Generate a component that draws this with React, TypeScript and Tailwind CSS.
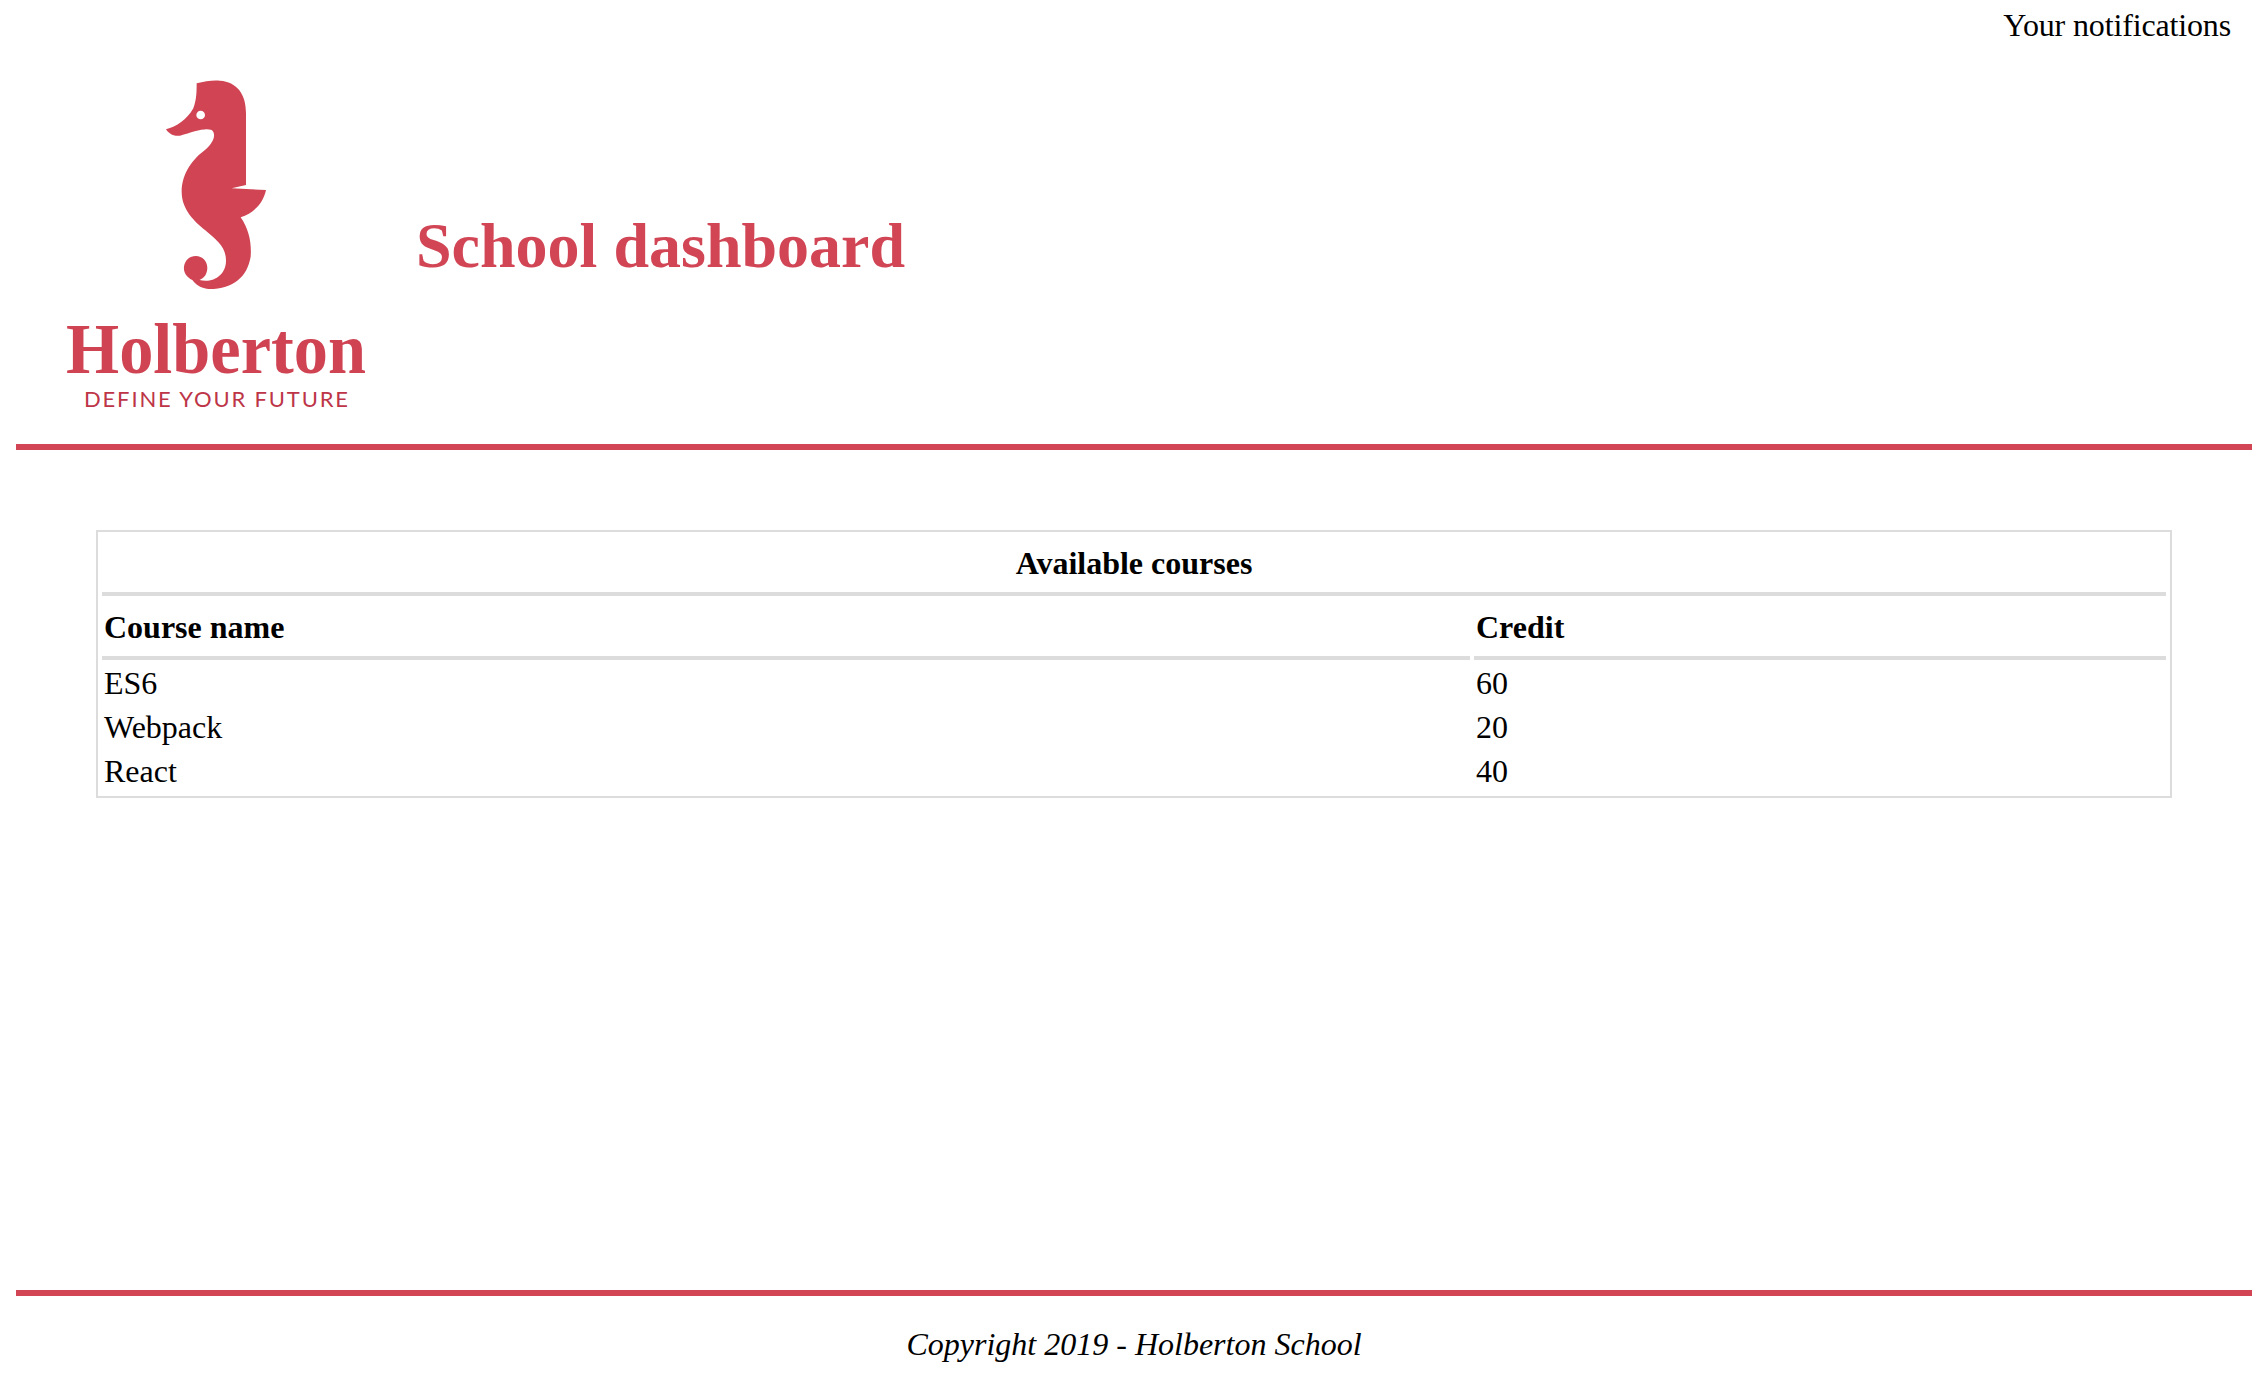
const courses = [
  { name: "ES6", credit: 60 },
  { name: "Webpack", credit: 20 },
  { name: "React", credit: 40 },
];

function Logo() {
  return (
    <svg width="384" height="400" viewBox="0 0 384 400" className="shrink-0">
      <g transform="translate(114 26) scale(0.3333)">
        <path
          fill="#d04454"
          d="M200 40 C225 33 250 30 270 32 C320 36 348 70 348 130 L348 345 L305 355 L408 360 C400 400 370 430 332 442 C358 480 365 520 362 560 C352 620 310 658 235 657 C212 655 196 642 187 630 C168 620 160 605 162 590 C165 570 180 558 197 558 C218 558 232 575 232 593 C232 612 222 625 208 630 C250 640 288 615 288 572 C288 530 260 510 225 480 C195 455 155 420 155 365 C155 310 190 265 225 240 C255 215 258 190 245 180 C225 172 190 185 150 197 C130 200 115 190 108 178 C140 170 170 150 190 115 C200 90 200 60 200 40 Z"
        />
        <circle cx="212" cy="135" r="13" fill="#fff" />
      </g>
      <text
        x="50"
        y="329"
        fill="#cf4353"
        fontFamily="'Liberation Serif', serif"
        fontWeight="700"
        fontSize="72"
        textLength="300"
        lengthAdjust="spacingAndGlyphs"
      >
        Holberton
      </text>
      <text
        x="68"
        y="363"
        fill="#bd3547"
        fontFamily="Lato, sans-serif"
        fontSize="22"
        textLength="264"
        lengthAdjust="spacing"
      >
        DEFINE YOUR FUTURE
      </text>
    </svg>
  );
}

export default function App() {
  return (
    <div className="flex h-[1376px] flex-col bg-white pr-3 pl-4 font-['Liberation_Serif',serif] text-[32px] leading-[36px] text-black">
      <div className="pt-[7px] pr-[21px] pb-[1px] text-right tracking-[-0.15px]">
        Your notifications
      </div>

      <header className="flex items-center border-b-[6px] border-[#d14555]">
        <Logo />
        <h1 className="ml-4 pt-1 text-[64px] leading-[74px] font-bold text-[#d14555]">
          School dashboard
        </h1>
      </header>

      <main className="grow px-20 pt-20">
        <table className="w-full table-fixed border-separate border-spacing-[4px] border-2 border-[#dcdcdc]">
          <colgroup>
            <col className="w-[1368px]" />
            <col />
          </colgroup>
          <thead>
            <tr>
              <th
                colSpan={2}
                className="border-b-4 border-[#dcdcdc] px-[2px] pt-[9px] pb-[11px] text-center font-bold"
              >
                Available courses
              </th>
            </tr>
            <tr>
              <th className="border-b-4 border-[#dcdcdc] px-[2px] pt-[9px] pb-[11px] text-left font-bold">
                Course name
              </th>
              <th className="border-b-4 border-[#dcdcdc] px-[2px] pt-[9px] pb-[11px] text-left font-bold">
                Credit
              </th>
            </tr>
          </thead>
          <tbody>
            {courses.map((c) => (
              <tr key={c.name}>
                <td className="px-[2px] pt-[1px] pb-[3px]">{c.name}</td>
                <td className="px-[2px] pt-[1px] pb-[3px]">{c.credit}</td>
              </tr>
            ))}
          </tbody>
        </table>
      </main>

      <footer className="border-t-[6px] border-[#d14555] pt-[30px] pb-[14px] text-center italic">
        Copyright 2019 - Holberton School
      </footer>
    </div>
  );
}
